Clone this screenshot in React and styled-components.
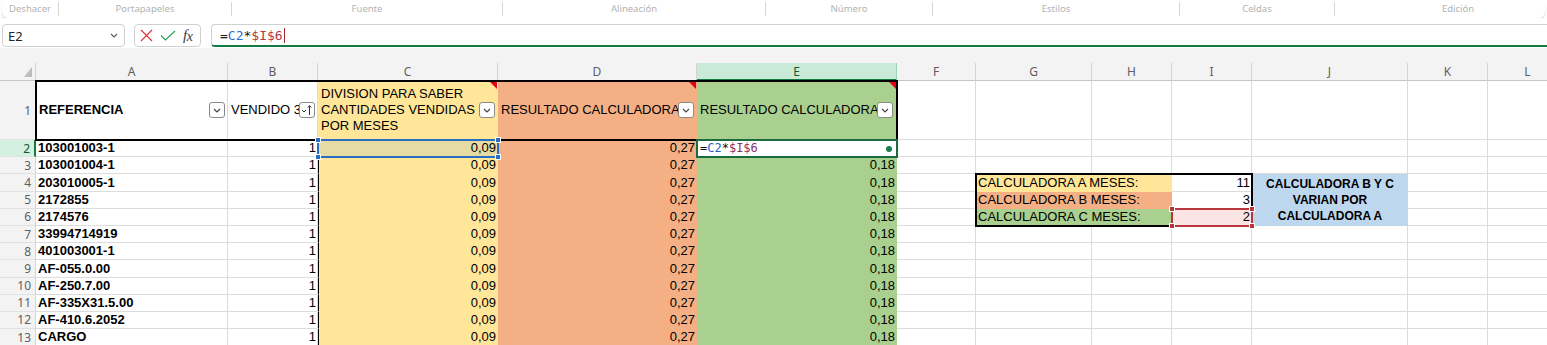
import React from "react";
import styled, { createGlobalStyle } from "styled-components";

const YELLOW = "#FFE699";
const ORANGE = "#F4B084";
const GREEN = "#A9D08E";
const BLUE = "#BDD7EE";
const GRID = "#DCDCDC";
const XL_GREEN = "#107C41";

const COLS = [
  { key: "A", w: 192 },
  { key: "B", w: 90 },
  { key: "C", w: 180 },
  { key: "D", w: 199 },
  { key: "E", w: 200 },
  { key: "F", w: 79 },
  { key: "G", w: 116 },
  { key: "H", w: 80 },
  { key: "I", w: 80 },
  { key: "J", w: 156 },
  { key: "K", w: 80 },
  { key: "L", w: 80 },
];

const GROUPS = [
  { label: "Deshacer", w: 57 },
  { label: "Portapapeles", w: 173 },
  { label: "Fuente", w: 271 },
  { label: "Alineación", w: 263 },
  { label: "Número", w: 167 },
  { label: "Estilos", w: 247 },
  { label: "Celdas", w: 155 },
  { label: "Edición", w: 246 },
];

const REFS = [
  "103001003-1",
  "103001004-1",
  "203010005-1",
  "2172855",
  "2174576",
  "33994714919",
  "401003001-1",
  "AF-055.0.00",
  "AF-250.7.00",
  "AF-335X31.5.00",
  "AF-410.6.2052",
  "CARGO",
];

const col = (k) => COLS.findIndex((c) => c.key === k) + 2;

const GlobalStyle = createGlobalStyle`
  * { box-sizing: border-box; }
  html, body { margin: 0; padding: 0; background: #fff; overflow: hidden; }
  body { font-family: "Liberation Sans", Arial, sans-serif; }
`;

const Page = styled.div`
  width: 1547px;
  height: 345px;
  overflow: hidden;
  display: flex;
  flex-direction: column;
  background: #fff;
`;

const Ribbon = styled.div`
  flex: none;
  height: 18px;
  margin: 0 2px;
  display: flex;
  align-items: center;
  background: #fff;
  border-radius: 0 0 6px 6px;
  box-shadow: 0 1px 0 #d4d4d4, 0 3px 3px rgba(0, 0, 0, 0.07);
  overflow: hidden;
`;

const Group = styled.div`
  flex: none;
  width: ${(p) => p.$w}px;
  height: 14px;
  border-right: ${(p) => (p.$last ? "none" : "1px solid #d6d6d6")};
  font: 9.5px/14px "Noto Sans", sans-serif;
  color: #b3b3b3;
  text-align: center;
  white-space: nowrap;
`;

const FormulaRow = styled.div`
  flex: none;
  height: 30px;
  display: flex;
  align-items: flex-start;
  padding: 6px 0 0 2px;
  background: #fff;
`;

const NameBox = styled.div`
  width: 123px;
  height: 23px;
  border: 1px solid #d1d1d1;
  border-radius: 4px;
  display: flex;
  align-items: center;
  justify-content: space-between;
  padding: 0 6px 0 5px;
  font: 13px "Noto Sans", sans-serif;
  color: #242424;
`;

const IconBox = styled.div`
  width: 67px;
  height: 23px;
  margin-left: 9px;
  border: 1px solid #d1d1d1;
  border-radius: 4px;
  display: flex;
  align-items: center;
  gap: 7px;
  padding-left: 5px;
`;

const Fx = styled.span`
  font: italic 15px "Liberation Serif", serif;
  color: #3b3b3b;
  letter-spacing: -0.5px;

  i:last-child {
    font-size: 14px;
    position: relative;
    top: 1px;
  }
`;

const FormulaInput = styled.div`
  flex: 1;
  height: 23px;
  margin-left: 10px;
  margin-right: -8px;
  border: 1px solid #d1d1d1;
  border-bottom: 2px solid ${XL_GREEN};
  border-radius: 4px 0 0 4px;
  display: flex;
  align-items: center;
  padding-left: 8px;
  font: 13px "DejaVu Sans Mono", monospace;
  color: #1a1a1a;
`;

const Tok = styled.span`
  color: ${(p) => p.$c || "inherit"};
`;

const Caret = styled.span`
  width: 1px;
  height: 15px;
  background: #a4262c;
  margin-left: 1px;
`;

const SheetArea = styled.div`
  flex: 1;
  background: #f3f3f3;
  padding-top: 15px;
  overflow: hidden;
`;

const Grid = styled.div`
  display: grid;
  grid-template-columns: 36px ${COLS.map((c) => `${c.w}px`).join(" ")};
  grid-template-rows: 18px 59px repeat(12, 17.2px);
  width: max-content;
  background: #fff;
`;

const Corner = styled.div`
  grid-column: 1;
  grid-row: 1;
  background: #f3f3f3;
  border-right: 1px solid #d4d4d4;
  border-bottom: 1px solid #c6c6c6;
  display: flex;
  align-items: flex-end;
  justify-content: flex-end;
  padding: 0 3px 3px 0;
`;

const ColHead = styled.div`
  grid-column: ${(p) => p.$c};
  grid-row: 1;
  background: ${(p) => (p.$active ? "#CAEAD8" : "#f3f3f3")};
  color: ${(p) => (p.$active ? "#0E5C2F" : "#5f5f5f")};
  border-right: 1px solid ${(p) => (p.$active ? "#9fd3b6" : "#d4d4d4")};
  border-bottom: ${(p) => (p.$active ? `2px solid ${XL_GREEN}` : "1px solid #c6c6c6")};
  display: flex;
  align-items: center;
  justify-content: center;
  font: 12px "Noto Sans", sans-serif;
`;

const RowHead = styled.div`
  grid-column: 1;
  grid-row: ${(p) => p.$r};
  background: ${(p) => (p.$active ? "#D3F0E0" : "#f3f3f3")};
  color: ${(p) => (p.$active ? "#0E5C2F" : "#5f5f5f")};
  border-right: ${(p) => (p.$active ? `2px solid ${XL_GREEN}` : "1px solid #d4d4d4")};
  border-bottom: 1px solid #e1e1e1;
  display: flex;
  align-items: center;
  justify-content: flex-end;
  padding-right: 4px;
  font: 12px "Noto Sans", sans-serif;
`;

const Cell = styled.div`
  grid-column: ${(p) => p.$c} / span ${(p) => p.$span || 1};
  grid-row: ${(p) => p.$r} / span ${(p) => p.$rows || 1};
  position: relative;
  min-width: 0;
  background: ${(p) => p.$bg || "#fff"};
  border-right: 1px solid ${(p) => p.$bg || GRID};
  border-bottom: 1px solid ${(p) => p.$bg || GRID};
  border-left: ${(p) => (p.$edge ? "1px solid #000" : "none")};
  display: flex;
  align-items: ${(p) => (p.$middle ? "center" : "flex-end")};
  justify-content: ${(p) =>
    p.$align === "right" ? "flex-end" : p.$align === "center" ? "center" : "flex-start"};
  text-align: ${(p) => p.$align || "left"};
  padding: 0 1px 0 2px;
  font-size: ${(p) => p.$size || 13}px;
  line-height: 16px;
  font-weight: ${(p) => (p.$bold ? 700 : 400)};
  color: #000;
  white-space: nowrap;
  overflow: hidden;
`;

const HeadText = styled.span`
  flex: 1;
  min-width: 0;
  overflow: hidden;
  white-space: nowrap;
  padding-left: 1px;
`;

const Lines = styled.span`
  white-space: normal;
`;

const FilterBtn = styled.span`
  flex: none;
  width: 16px;
  height: 16px;
  margin: 0 ${(p) => p.$gap || 1}px 0 0;
  border: 1px solid #8a8a8a;
  border-radius: 3px;
  background: #fff;
  display: flex;
  align-items: center;
  justify-content: center;
`;

const Note = styled.span`
  position: absolute;
  top: 0;
  right: 0;
  border-top: 8px solid #e3001b;
  border-left: 8px solid transparent;
`;

const Frame = styled.div`
  grid-column: ${(p) => p.$c1} / ${(p) => p.$c2};
  grid-row: ${(p) => p.$r1} / ${(p) => p.$r2};
  margin: -1px;
  border: 2px solid ${(p) => p.$color};
  position: relative;
  z-index: ${(p) => p.$z || 3};
  pointer-events: none;
`;

const Handle = styled.span`
  position: absolute;
  width: 6px;
  height: 6px;
  background: ${(p) => p.$color};
  border: 1px solid #fff;
  ${(p) => (p.$pos[0] === "t" ? "top: -4px;" : "bottom: -4px;")}
  ${(p) => (p.$pos[1] === "l" ? "left: -4px;" : "right: -4px;")}
`;

const FillDot = styled.span`
  position: absolute;
  right: 4px;
  top: 50%;
  width: 6px;
  height: 6px;
  margin-top: -3px;
  border-radius: 50%;
  background: #15804a;
`;

const CellFormula = styled.span`
  font: 12px "DejaVu Sans Mono", monospace;
  color: #111;
  padding-left: 1px;
`;

function Chevron({ color = "#444" }) {
  return (
    <svg width="8" height="5" viewBox="0 0 8 5">
      <path d="M1 1 L4 4 L7 1" fill="none" stroke={color} strokeWidth="1.1" />
    </svg>
  );
}

function SortIcon() {
  return (
    <svg width="12" height="12" viewBox="0 0 12 12">
      <path d="M1 6 L3 8 L5 6" fill="none" stroke="#333" strokeWidth="1" />
      <path d="M8.5 11 V2 M6.8 3.5 L8.5 1.6 L10.2 3.5" fill="none" stroke="#333" strokeWidth="1" />
    </svg>
  );
}

function Selection({ c1, c2, r1, r2, color, z }) {
  return (
    <Frame $c1={c1} $c2={c2} $r1={r1} $r2={r2} $color={color} $z={z}>
      {["tl", "tr", "bl", "br"].map((p) => (
        <Handle key={p} $pos={p} $color={color} />
      ))}
    </Frame>
  );
}

function HeaderRow() {
  const r = 2;
  return (
    <>
      <RowHead $r={r}>1</RowHead>
      <Cell $c={col("A")} $r={r} $middle $bold>
        <HeadText>REFERENCIA</HeadText>
        <FilterBtn>
          <Chevron />
        </FilterBtn>
      </Cell>
      <Cell $c={col("B")} $r={r} $middle>
        <HeadText>VENDIDO 3 MESES</HeadText>
        <FilterBtn>
          <SortIcon />
        </FilterBtn>
      </Cell>
      <Cell $c={col("C")} $r={r} $middle $bg={YELLOW}>
        <HeadText>
          DIVISION PARA SABER
          <br />
          CANTIDADES VENDIDAS
          <br />
          POR MESES
        </HeadText>
        <FilterBtn>
          <Chevron />
        </FilterBtn>
        <Note />
      </Cell>
      <Cell $c={col("D")} $r={r} $middle $bg={ORANGE}>
        <HeadText>RESULTADO CALCULADORA B</HeadText>
        <FilterBtn $gap={0}>
          <Chevron />
        </FilterBtn>
        <Note />
      </Cell>
      <Cell $c={col("E")} $r={r} $middle $bg={GREEN}>
        <HeadText>RESULTADO CALCULADORA C</HeadText>
        <FilterBtn $gap={2}>
          <Chevron />
        </FilterBtn>
        <Note />
      </Cell>
      {["F", "G", "H", "I", "J", "K", "L"].map((k) => (
        <Cell key={k} $c={col(k)} $r={r} />
      ))}
    </>
  );
}

const SIDE = {
  4: { label: "CALCULADORA A MESES:", bg: YELLOW, value: "11" },
  5: { label: "CALCULADORA B MESES:", bg: ORANGE, value: "3" },
  6: { label: "CALCULADORA C MESES:", bg: GREEN, value: "2", valueBg: "#FCE4E4" },
};

function DataRow({ n, reference }) {
  const r = n + 1;
  const side = SIDE[n];
  return (
    <>
      <RowHead $r={r} $active={n === 2}>
        {n}
      </RowHead>
      <Cell $c={col("A")} $r={r} $bold>
        {reference}
      </Cell>
      <Cell $c={col("B")} $r={r} $align="right">
        1
      </Cell>
      <Cell $c={col("C")} $r={r} $align="right" $bg={n === 2 ? "#E6DBA2" : YELLOW} $edge>
        0,09
      </Cell>
      <Cell $c={col("D")} $r={r} $align="right" $bg={ORANGE}>
        0,27
      </Cell>
      {n === 2 ? (
        <Cell $c={col("E")} $r={r} $middle>
          <CellFormula>
            =<Tok $c="#2463c4">C2</Tok>*<Tok $c="#8d2f62">$I$6</Tok>
          </CellFormula>
        </Cell>
      ) : (
        <Cell $c={col("E")} $r={r} $align="right" $bg={GREEN}>
          0,18
        </Cell>
      )}
      <Cell $c={col("F")} $r={r} />
      {side ? (
        <>
          <Cell $c={col("G")} $span={2} $r={r} $bg={side.bg}>
            {side.label}
          </Cell>
          <Cell $c={col("I")} $r={r} $align="right" $bg={side.valueBg}>
            {side.value}
          </Cell>
        </>
      ) : (
        ["G", "H", "I"].map((k) => <Cell key={k} $c={col(k)} $r={r} />)
      )}
      {n === 4 && (
        <Cell $c={col("J")} $r={r} $rows={3} $bg={BLUE} $align="center" $middle $bold $size={12}>
          <Lines>
            CALCULADORA B Y C
            <br />
            VARIAN POR
            <br />
            CALCULADORA A
          </Lines>
        </Cell>
      )}
      {(n < 4 || n > 6) && <Cell $c={col("J")} $r={r} />}
      <Cell $c={col("K")} $r={r} />
      <Cell $c={col("L")} $r={r} />
    </>
  );
}

export default function App() {
  return (
    <Page>
      <GlobalStyle />
      <Ribbon>
        {GROUPS.map((g, i) => (
          <Group key={g.label} $w={g.w} $last={i === GROUPS.length - 1}>
            {g.label}
          </Group>
        ))}
      </Ribbon>

      <FormulaRow>
        <NameBox>
          E2
          <Chevron color="#555" />
        </NameBox>
        <IconBox>
          <svg width="13" height="13" viewBox="0 0 13 13">
            <path d="M1 1 L12 12 M12 1 L1 12" stroke="#d9383e" strokeWidth="1.2" fill="none" />
          </svg>
          <svg width="16" height="11" viewBox="0 0 16 11">
            <path d="M1 5.5 L5.5 10 L15 1" stroke="#34a05a" strokeWidth="1.2" fill="none" />
          </svg>
          <Fx>
            <i>f</i>
            <i>x</i>
          </Fx>
        </IconBox>
        <FormulaInput>
          =<Tok $c="#2b70cc">C2</Tok>*<Tok $c="#b4373f">$I$6</Tok>
          <Caret />
        </FormulaInput>
      </FormulaRow>

      <SheetArea>
        <Grid>
          <Corner>
            <svg width="8" height="10" viewBox="0 0 8 10">
              <polygon points="8,0 8,10 0,10" fill="#bdbdbd" />
            </svg>
          </Corner>
          {COLS.map((c, i) => (
            <ColHead key={c.key} $c={i + 2} $active={c.key === "E"}>
              {c.key}
            </ColHead>
          ))}

          <HeaderRow />
          {REFS.map((ref, i) => (
            <DataRow key={ref} n={i + 2} reference={ref} />
          ))}

          <Frame $c1={col("A")} $c2={col("F")} $r1={2} $r2={3} $color="#000" $z={2} />
          <Frame $c1={col("G")} $c2={col("J")} $r1={5} $r2={8} $color="#000" $z={2} />
          <Selection c1={col("C")} c2={col("D")} r1={3} r2={4} color="#2a6ec4" />
          <Selection c1={col("I")} c2={col("J")} r1={7} r2={8} color="#b8353c" />
          <Frame $c1={col("E")} $c2={col("F")} $r1={3} $r2={4} $color="#1b6b3f" $z={4}>
            <FillDot />
          </Frame>
        </Grid>
      </SheetArea>
    </Page>
  );
}
